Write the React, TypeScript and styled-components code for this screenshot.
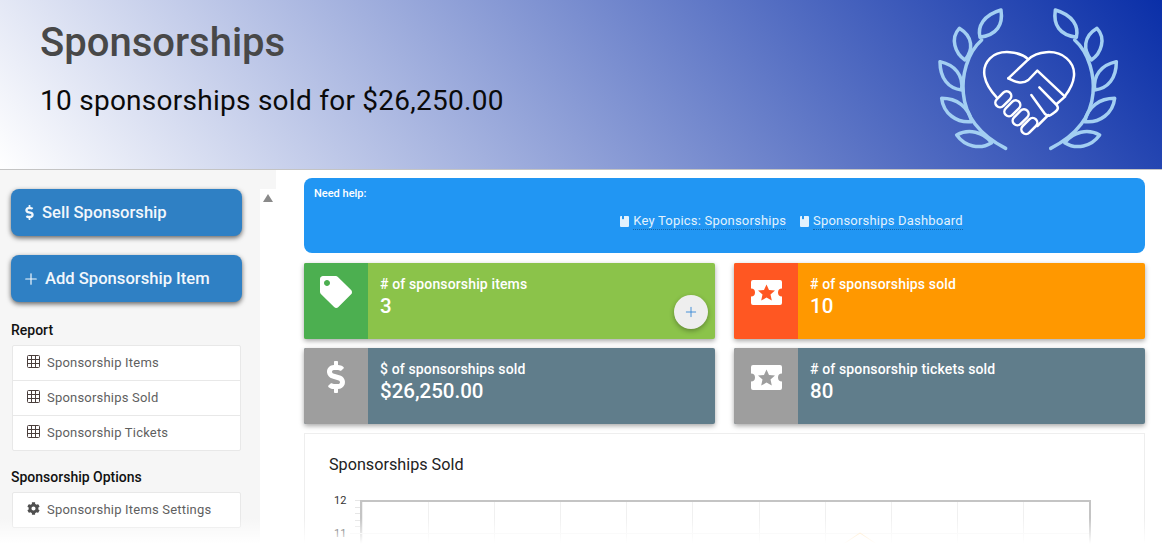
import styled, { createGlobalStyle } from 'styled-components';
import { Plus } from 'lucide-react';
import { FaCog, FaDollarSign, FaTag } from 'react-icons/fa';

const GlobalStyle = createGlobalStyle`
  html, body {
    margin: 0;
    height: 100%;
    overflow: hidden;
    background: #fff;
    font-family: Roboto, "Liberation Sans", sans-serif;
  }
`;

function TicketStar({ star }: { star: string }) {
  return (
    <svg width="31" height="25" viewBox="0 0 31 25">
      <path
        fill="#fff"
        d="M2 0h27a2 2 0 0 1 2 2v6.500a4 4 0 0 0 0 8V23a2 2 0 0 1-2 2H2a2 2 0 0 1-2-2v-6.500a4 4 0 0 0 0-8V2a2 2 0 0 1 2-2z"
      />
      <path fill={star} d="M15.500 4.500l2.500 5.500 6 .6-4.500 4 1.300 6-5.300-3.100-5.300 3.100 1.300-6-4.500-4 6-.6z" />
    </svg>
  );
}

function GridIcon() {
  return (
    <svg width="13" height="13" viewBox="0 0 13 13">
      <rect x="0.500" y="0.500" width="12" height="12" rx="1" fill="none" stroke="#4a3f3c" />
      <path d="M4.500 0v13M8.500 0v13M0 4.500h13M0 8.500h13" stroke="#4a3f3c" strokeWidth="1" />
    </svg>
  );
}

function BookIcon() {
  return (
    <svg width="9" height="11" viewBox="0 0 9 11">
      <path fill="#e3f2fd" d="M1 0h7a1 1 0 0 1 1 1v9a1 1 0 0 1-1 1H1a1 1 0 0 1-1-1V1a1 1 0 0 1 1-1z" />
      <path fill="#2196f3" d="M2 0h2v3.500L3 2.800 2 3.500z" />
    </svg>
  );
}

function Laurel() {
  const leaves = [
    'M240 112C232 80 250 45 303 30 310 75 290 105 240 112Z',
    'M178 85C150 115 165 160 195 180 220 150 220 110 178 85Z',
    'M120 185C120 235 145 265 185 270 190 225 165 195 120 185Z',
    'M125 295C130 340 170 370 215 365 205 320 170 295 125 295Z',
    'M170 405C195 440 240 450 275 428 250 395 205 385 170 405Z',
  ];
  return (
    <g fill="none" stroke="#a3cff2" strokeWidth="10.500" strokeLinejoin="round" strokeLinecap="round">
      <path d="M245 120C200 160 185 230 190 280 195 340 230 400 317 445" />
      {leaves.map((d) => <path key={d} d={d} />)}
    </g>
  );
}

function HeartLogo() {
  return (
    <svg width="262" height="169" viewBox="0 0 786 507">
      <Laurel />
      <g transform="translate(769 0) scale(-1 1)">
        <Laurel />
      </g>
      <g fill="none" stroke="#fff" strokeWidth="7.500" strokeLinejoin="round" strokeLinecap="round">
        <path d="M385 178C360 155 300 145 270 175 240 205 250 250 290 292" />
        <path d="M325 235L385 178C410 155 465 145 500 175 535 205 525 250 495 288" />
        <path d="M325 235C345 245 365 255 385 240L412 212 495 290 470 312" />
        <path d="M418 262L470 315C478 325 472 332 460 340 450 348 445 350 435 342L394 285" />
        <path d="M445 345L412 378" />
        <rect x="282" y="284" width="56" height="28" rx="14" transform="rotate(-45 310 298)" />
        <rect x="309" y="311" width="56" height="28" rx="14" transform="rotate(-45 337 325)" />
        <rect x="334" y="338" width="56" height="28" rx="14" transform="rotate(-45 362 352)" />
        <rect x="360" y="364" width="56" height="28" rx="14" transform="rotate(-45 388 378)" />
      </g>
    </svg>
  );
}

function App() {
  return (
    <>
      <GlobalStyle />
      <Page>
        <Header>
          <TitleBlock>
            <Title>Sponsorships</Title>
            <Subtitle>10 sponsorships sold for $26,250.00</Subtitle>
          </TitleBlock>
          <HeartLogo />
        </Header>
        <Body>
          <Sidebar>
            <ActionButton><FaDollarSign size={15} />Sell Sponsorship</ActionButton>
            <ActionButton><Plus size={18} strokeWidth={1.6} />Add Sponsorship Item</ActionButton>
            <SectionLabel>Report</SectionLabel>
            <LinkList>
              <LinkRow><GridIcon />Sponsorship Items</LinkRow>
              <LinkRow><GridIcon />Sponsorships Sold</LinkRow>
              <LinkRow><GridIcon />Sponsorship Tickets</LinkRow>
            </LinkList>
            <SectionLabel>Sponsorship Options</SectionLabel>
            <LinkList>
              <LinkRow><FaCog size={13} />Sponsorship Items Settings</LinkRow>
            </LinkList>
          </Sidebar>
          <ScrollTrack><ScrollArrow /></ScrollTrack>
          <Main>
            <HelpBox>
              <HelpTitle>Need help:</HelpTitle>
              <HelpLinks>
                <HelpLink><BookIcon /><span>Key Topics: Sponsorships</span></HelpLink>
                <HelpLink><BookIcon /><span>Sponsorships Dashboard</span></HelpLink>
              </HelpLinks>
            </HelpBox>
            <StatGrid>
              <StatCard $bg="#8bc34a">
                <StatIcon $bg="#4caf50"><FaTag size={32} /></StatIcon>
                <StatText>
                  <StatLabel># of sponsorship items</StatLabel>
                  <StatValue>3</StatValue>
                </StatText>
                <RoundButton><Plus size={16} strokeWidth={1.4} /></RoundButton>
              </StatCard>
              <StatCard $bg="#ff9800">
                <StatIcon $bg="#ff5722" $top={17}><TicketStar star="#ff5722" /></StatIcon>
                <StatText>
                  <StatLabel># of sponsorships sold</StatLabel>
                  <StatValue>10</StatValue>
                </StatText>
              </StatCard>
              <StatCard $bg="#607d8b">
                <StatIcon $bg="#9e9e9e"><FaDollarSign size={32} /></StatIcon>
                <StatText>
                  <StatLabel>$ of sponsorships sold</StatLabel>
                  <StatValue>$26,250.00</StatValue>
                </StatText>
              </StatCard>
              <StatCard $bg="#607d8b">
                <StatIcon $bg="#9e9e9e" $top={17}><TicketStar star="#9e9e9e" /></StatIcon>
                <StatText>
                  <StatLabel># of sponsorship tickets sold</StatLabel>
                  <StatValue>80</StatValue>
                </StatText>
              </StatCard>
            </StatGrid>
            <ChartCard>
              <ChartTitle>Sponsorships Sold</ChartTitle>
              <ChartBody>
                <AxisLabels>
                  <span>12</span>
                  <span>11</span>
                </AxisLabels>
                <Plot>
                  <Ticks />
                  <HLine />
                  {Array.from({ length: 11 }, (_, i) => <GridCell key={i} />)}
                  <Peak viewBox="0 0 120 42" width="120" height="42">
                    <path d="M0 41L60 1 120 41" fill="none" stroke="#ffd9a0" strokeWidth="1" />
                  </Peak>
                </Plot>
              </ChartBody>
            </ChartCard>
          </Main>
        </Body>
        <BottomFade />
      </Page>
    </>
  );
}

const Page = styled.div`
  position: relative;
  width: 1162px;
  height: 551px;
  overflow: hidden;
`;

const Header = styled.header`
  height: 170px;
  box-sizing: border-box;
  display: flex;
  justify-content: space-between;
  background: linear-gradient(50deg, #ffffff 0%, #0a2fa8 100%);
  border-bottom: 1px solid #c4c4c4;
`;

const TitleBlock = styled.div`
  padding: 19px 0 0 40px;
`;

const Title = styled.h1`
  margin: 0;
  font-size: 40px;
  line-height: 48px;
  font-weight: 500;
  color: #484848;
`;

const Subtitle = styled.div`
  margin-top: 14px;
  font-size: 28px;
  line-height: 40px;
  letter-spacing: 0.26px;
  color: #0a0a0a;
`;

const Body = styled.div`
  display: flex;
  height: 381px;
`;

const Sidebar = styled.aside`
  width: 260px;
  flex: none;
  box-sizing: border-box;
  padding: 19px 19px 0 11px;
  background: #f6f6f6;
`;

const ScrollTrack = styled.div`
  width: 16px;
  flex: none;
  padding: 24px 3px 0;
  box-sizing: border-box;
  background: linear-gradient(#f6f6f6 19px, #fff 19px);
`;

const ScrollArrow = styled.div`
  width: 0;
  height: 0;
  border-left: 5px solid transparent;
  border-right: 5px solid transparent;
  border-bottom: 8px solid #8a8a8a;
`;

const ActionButton = styled.button`
  width: 231px;
  height: 47px;
  display: flex;
  align-items: center;
  gap: 5px;
  margin-bottom: 19px;
  padding: 0 11px;
  border: none;
  border-radius: 8px;
  background: #2f80c4;
  color: #f2f7fc;
  font: 500 16.6px Roboto, sans-serif;
  box-shadow: 0 2px 5px rgba(0, 0, 0, 0.6);
`;

const SectionLabel = styled.div`
  font-size: 14px;
  line-height: 18px;
  font-weight: 500;
  color: #111;
  margin-bottom: 6px;
`;

const LinkList = styled.div`
  width: 229px;
  box-sizing: border-box;
  margin: 0 0 17px 1px;
  border: 1px solid #e8e8e8;
  border-radius: 2px;
  background: #fff;
`;

const LinkRow = styled.div`
  height: 34px;
  box-sizing: border-box;
  display: flex;
  align-items: center;
  gap: 7px;
  padding: 0 0 1px 14px;
  font-size: 13px;
  color: #5f5f5f;
  letter-spacing: 0.2px;

  & + & {
    border-top: 1px solid #e8e8e8;
    height: 35px;
  }

  svg {
    color: #4f4f4f;
    margin-top: -2px;
  }
`;

const Main = styled.main`
  flex: 1;
  min-width: 0;
  padding: 8px 17px 0 28px;
`;

const HelpBox = styled.div`
  height: 75px;
  box-sizing: border-box;
  padding: 9px 10px;
  border-radius: 8px;
  background: #2196f3;
  color: #fff;
`;

const HelpTitle = styled.div`
  font-size: 11px;
  line-height: 13px;
  font-weight: 500;
`;

const HelpLinks = styled.div`
  display: flex;
  justify-content: center;
  gap: 14px;
  margin-top: 12px;
  padding-left: 134px;
`;

const HelpLink = styled.div`
  display: flex;
  align-items: center;
  gap: 4px;
  font-size: 13px;
  line-height: 17px;
  letter-spacing: 0.2px;
  color: #e3f2fd;

  span {
    border-bottom: 1px dotted #1565a8;
  }
`;

const StatGrid = styled.div`
  display: grid;
  grid-template-columns: 411px 411px;
  justify-content: space-between;
  gap: 9px 19px;
  margin-top: 10px;
`;

const StatCard = styled.div<{ $bg: string }>`
  position: relative;
  height: 76px;
  display: flex;
  border-radius: 2px;
  background: ${(p) => p.$bg};
  box-shadow: 0 2px 5px rgba(0, 0, 0, 0.35);
`;

const StatIcon = styled.div<{ $bg: string; $top?: number }>`
  width: 64px;
  flex: none;
  box-sizing: border-box;
  padding-top: ${(p) => p.$top ?? 13}px;
  display: flex;
  justify-content: center;
  align-items: flex-start;
  border-radius: 2px 0 0 2px;
  background: ${(p) => p.$bg};
  color: #fff;
`;

const StatText = styled.div`
  padding: 12px 12px 0;
  color: #fff;
`;

const StatLabel = styled.div`
  font-size: 14px;
  line-height: 18px;
  font-weight: 500;
  letter-spacing: 0.14px;
`;

const StatValue = styled.div`
  font-size: 20.500px;
  line-height: 26px;
  font-weight: 500;
`;

const RoundButton = styled.div`
  position: absolute;
  right: 7px;
  bottom: 10px;
  width: 34px;
  height: 34px;
  display: flex;
  align-items: center;
  justify-content: center;
  border-radius: 50%;
  background: #eeeeee;
  color: #3a8ad6;
  box-shadow: 0 2px 5px rgba(0, 0, 0, 0.3);
`;

const ChartCard = styled.section`
  margin-top: 9px;
  height: 130px;
  box-sizing: border-box;
  padding: 21px 24px 0;
  border: 1px solid #eeeeee;
  border-bottom: none;
`;

const ChartTitle = styled.div`
  font-size: 16.200px;
  line-height: 20px;
  color: #222;
`;

const ChartBody = styled.div`
  display: flex;
  margin-top: 25px;
`;

const AxisLabels = styled.div`
  width: 31px;
  flex: none;
  display: flex;
  flex-direction: column;
  gap: 20px;
  margin-top: -6px;
  font-size: 11px;
  line-height: 13px;
  color: #333;

  span {
    display: block;
    padding-left: 5px;
  }
`;

const Plot = styled.div`
  position: relative;
  width: 731px;
  height: 60px;
  box-sizing: border-box;
  display: grid;
  grid-template-columns: repeat(11, 1fr);
  border: 2px solid #c4c4c4;
  border-bottom: none;
`;

const Ticks = styled.div`
  position: absolute;
  left: -7px;
  top: -2px;
  width: 5px;
  height: 36px;
  background: repeating-linear-gradient(#e6e6e6 0 1px, transparent 1px 6.600px);
`;

const HLine = styled.div`
  position: absolute;
  left: -12px;
  right: 0;
  top: 31px;
  height: 1px;
  background: #f2f2f2;
`;

const GridCell = styled.div`
  border-left: 1px solid #f0f0f0;

  &:first-child {
    border-left: none;
  }
`;

const Peak = styled.svg`
  position: absolute;
  left: 438px;
  top: 30px;
`;

const BottomFade = styled.div`
  position: absolute;
  left: 0;
  right: 0;
  bottom: 0;
  height: 33px;
  background: linear-gradient(rgba(255, 255, 255, 0), #fff 78%);
  pointer-events: none;
`;

export default App;
